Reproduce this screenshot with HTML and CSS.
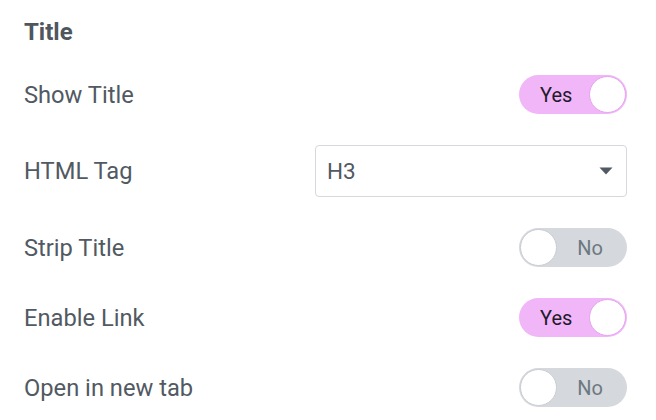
FILE: index.html
```html
<!DOCTYPE html>
<html>
<head>
<meta charset="utf-8">
<link rel="stylesheet" href="styles.css">
</head>
<body>
<div class="panel">
  <div class="heading">Title</div>
  <div class="rows">
    <div class="row">
      <span class="label">Show Title</span>
      <span class="toggle on"><span class="txt">Yes</span><span class="knob"></span></span>
    </div>
    <div class="row row-select">
      <span class="label">HTML Tag</span>
      <span class="select"><span class="val">H3</span>
        <svg class="caret" width="14" height="8" viewBox="0 0 14 8"><path d="M0.5 0.5 L13.5 0.5 L7 7.5 Z" fill="#515962"/></svg>
      </span>
    </div>
    <div class="row">
      <span class="label">Strip Title</span>
      <span class="toggle off"><span class="knob"></span><span class="txt">No</span></span>
    </div>
    <div class="row">
      <span class="label">Enable Link</span>
      <span class="toggle on"><span class="txt">Yes</span><span class="knob"></span></span>
    </div>
    <div class="row">
      <span class="label">Open in new tab</span>
      <span class="toggle off"><span class="knob"></span><span class="txt">No</span></span>
    </div>
  </div>
</div>
</body>
</html>
```
FILE: styles.css
```css
html, body { margin: 0; padding: 0; background: #ffffff; }
body { font-family: Roboto, "Liberation Sans", sans-serif; color: #515962; }
.panel { width: 656px; height: 420px; box-sizing: border-box; padding: 13px 29px 0 24px; }
.heading { height: 38px; line-height: 38px; font-size: 24px; font-weight: 700; color: #4f565e; margin-bottom: 24px; }
.rows { display: flex; flex-direction: column; gap: 31px; }
.row { display: flex; align-items: center; justify-content: space-between; height: 39px; }
.row-select { height: 52px; }
.label { font-size: 23.7px; color: #515962; }
.toggle { width: 108px; height: 39px; box-sizing: border-box; border-radius: 20px; display: flex; align-items: center; justify-content: space-between; padding: 1px; font-size: 20px; }
.toggle.on { background: #f1b6f8; }
.toggle.off { background: #d5d8dc; }
.toggle .knob { width: 37px; height: 37px; box-sizing: border-box; border-radius: 50%; background: #ffffff; }
.toggle.on .knob { border: 1px solid #e7a2f1; }
.toggle.off .knob { border: 1px solid #c9cdd2; }
.toggle.on .txt { color: #1e1b2c; padding-left: 20px; }
.toggle.off .txt { color: #6d7882; padding-right: 23px; }
.select { width: 312px; height: 52px; box-sizing: border-box; border: 1px solid #d5d8dc; border-radius: 4px; display: flex; align-items: center; justify-content: space-between; padding: 0 13px 0 11px; }
.select .val { font-size: 22.5px; color: #515962; }
.caret { display: block; }
```
